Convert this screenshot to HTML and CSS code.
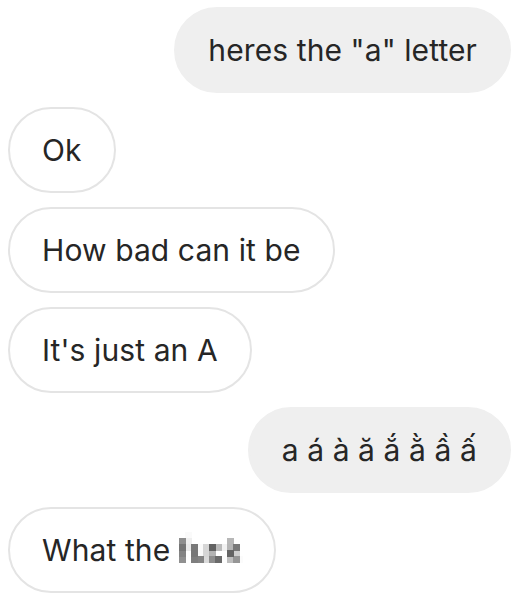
FILE: index.html
```html
<!DOCTYPE html>
<html lang="en">
<head>
    <meta charset="UTF-8">
    <meta name="viewport" content="width=device-width, initial-scale=1.0">
    <title>Messages</title>
    <link rel="stylesheet" href="styles.css">
</head>
<body>
    <svg class="defs" width="0" height="0" aria-hidden="true">
        <filter id="pixelate" x="0" y="0" width="1" height="1">
            <feGaussianBlur stdDeviation="0.9" result="soft"/>
            <feFlood x="3" y="3" width="1" height="1"/>
            <feComposite width="6" height="6"/>
            <feTile result="grid"/>
            <feComposite in="soft" in2="grid" operator="in"/>
            <feMorphology operator="dilate" radius="3"/>
        </filter>
    </svg>

    <div class="thread">
        <div class="msg sent">heres the "a" letter</div>
        <div class="msg received">Ok</div>
        <div class="msg received">How bad can it be</div>
        <div class="msg received">It's just an A</div>
        <div class="msg sent">a á à ă ắ ằ ầ ấ</div>
        <div class="msg received">What the <span class="censored">fuck</span></div>
    </div>
</body>
</html>
```

FILE: styles.css
```css
body {
    margin: 0;
    background: #ffffff;
    font-family: Inter, "Liberation Sans", sans-serif;
    color: #262626;
}
.defs {
    position: absolute;
}
.thread {
    display: flex;
    flex-direction: column;
    gap: 14px;
    padding: 7px 8px;
}
.msg {
    font-size: 30px;
    line-height: 36px;
    letter-spacing: 0.1px;
    padding: 23px 32px;
    border: 2px solid #e4e4e4;
    border-radius: 43px;
    white-space: nowrap;
}
.sent {
    align-self: flex-end;
    background: #efefef;
    border-color: #efefef;
}
.received {
    align-self: flex-start;
    background: #ffffff;
}
.censored {
    display: inline-block;
    filter: url(#pixelate);
    color: #262626;
}
```
